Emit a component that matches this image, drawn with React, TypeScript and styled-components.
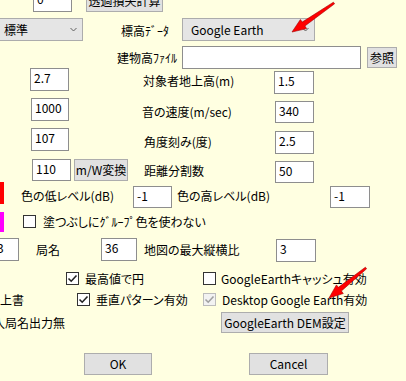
import React from "react";
import styled, { createGlobalStyle } from "styled-components";

const GlobalStyle = createGlobalStyle`
  html, body {
    margin: 0;
    padding: 0;
    background: #ffffe1;
  }
  body {
    font-family: "Noto Sans CJK JP", "Noto Sans", sans-serif;
    font-size: 12px;
    color: #000;
  }
`;

const Form = styled.div`
  position: relative;
  width: 406px;
  height: 381px;
  overflow: hidden;
  background: #ffffe1;
  font-feature-settings: "palt";
`;

const Row = styled.div<{ $top: number; $h: number; $cols: string; $shift?: number }>`
  display: grid;
  grid-template-columns: ${(p) => p.$cols};
  align-items: center;
  height: ${(p) => p.$h}px;
  margin-top: ${(p) => p.$top}px;
  margin-left: ${(p) => p.$shift ?? 0}px;
`;

const Cell = styled.span``;

const Label = styled.span<{ $dy?: number; $right?: boolean; $ml?: number }>`
  white-space: nowrap;
  line-height: 14px;
  margin-top: ${(p) => (p.$dy ?? 0) * 2}px;
  margin-left: ${(p) => p.$ml ?? 0}px;
  justify-self: ${(p) => (p.$right ? "end" : "start")};
`;

const TextBox = styled.div<{ $w: number; $h?: number; $at?: string; $ml?: number; $pad?: number }>`
  box-sizing: border-box;
  width: ${(p) => p.$w}px;
  height: ${(p) => p.$h ?? 23}px;
  margin-left: ${(p) => p.$ml ?? 0}px;
  align-self: ${(p) => p.$at ?? "center"};
  background: #fff;
  border: 1px solid #8e8e8e;
  padding: 0 0 3px ${(p) => p.$pad ?? 3}px;
  display: flex;
  align-items: center;
  line-height: 1;
`;

const Button = styled.div<{ $w: number; $h?: number; $at?: string }>`
  box-sizing: border-box;
  width: ${(p) => p.$w}px;
  height: ${(p) => p.$h ?? 22}px;
  align-self: ${(p) => p.$at ?? "center"};
  background: #e1e1e1;
  border: 1px solid #adadad;
  display: flex;
  align-items: center;
  justify-content: center;
  padding-bottom: 1px;
  white-space: nowrap;
`;

const Combo = styled.div<{ $w: number; $pad: number }>`
  box-sizing: border-box;
  width: ${(p) => p.$w}px;
  height: 23px;
  background: #e5e5e5;
  border: 1px solid #acacac;
  display: flex;
  align-items: center;
  justify-content: space-between;
  padding: 0 5px 1px ${(p) => p.$pad}px;
  white-space: nowrap;
`;

const Swatch = styled.div<{ $color: string; $h: number; $at: string }>`
  width: 4px;
  height: ${(p) => p.$h}px;
  align-self: ${(p) => p.$at};
  background: ${(p) => p.$color};
`;

const Box = styled.div<{ $disabled?: boolean }>`
  box-sizing: border-box;
  width: 13px;
  height: 13px;
  border: 1px solid ${(p) => (p.$disabled ? "#bcbcbc" : "#333")};
  background: ${(p) => (p.$disabled ? "#f2f2f2" : "#fff")};
  display: flex;
  align-items: center;
  justify-content: center;
`;

const Overlay = styled.svg`
  position: absolute;
  left: 0;
  top: 0;
  pointer-events: none;
`;

const Chevron = () => (
  <svg width="7" height="5" viewBox="0 0 7 5">
    <polyline points="0.5,1 3.5,4 6.5,1" fill="none" stroke="#606060" strokeWidth="1" />
  </svg>
);

const Check = ({ checked, disabled }: { checked?: boolean; disabled?: boolean }) => (
  <Box $disabled={disabled}>
    {checked && (
      <svg width="11" height="11" viewBox="0 0 11 11">
        <polyline
          points="1.5,5.5 4.2,8.2 9.5,2.5"
          fill="none"
          stroke={disabled ? "#a0a0a0" : "#222"}
          strokeWidth="1.6"
        />
      </svg>
    )}
  </Box>
);

// red hand-drawn annotation arrow, tail -> tip
function arrowPoints(x1: number, y1: number, x2: number, y2: number) {
  const dx = x2 - x1;
  const dy = y2 - y1;
  const len = Math.hypot(dx, dy);
  const ux = dx / len;
  const uy = dy / len;
  const nx = -uy;
  const ny = ux;
  const bx = x2 - ux * 14;
  const by = y2 - uy * 14;
  const pts = [
    [x1 + nx * 1, y1 + ny * 1],
    [bx + nx * 2.4, by + ny * 2.4],
    [bx + nx * 5.5, by + ny * 5.5],
    [x2, y2],
    [bx - nx * 5.5, by - ny * 5.5],
    [bx - nx * 2.4, by - ny * 2.4],
    [x1 - nx * 1, y1 - ny * 1],
  ];
  return pts.map((p) => p.map((v) => v.toFixed(1)).join(",")).join(" ");
}

const App: React.FC = () => {
  return (
    <>
      <GlobalStyle />
      <Form>
        <Row $top={-11} $h={23} $cols="33px 39px 14px 77px">
          <Cell />
          <TextBox $w={39}>0</TextBox>
          <Cell />
          <Button $w={77} $h={23}>透過損失計算</Button>
        </Row>

        <Row $top={6} $h={23} $shift={-3} $cols="86px 38px 61px 133px">
          <Combo $w={86} $pad={6}>
            <span>標準</span>
            <Chevron />
          </Combo>
          <Cell />
          <Label $dy={1}>標高ﾃﾞｰﾀ</Label>
          <Combo $w={133} $pad={8}>
            <span>Google Earth</span>
            <Chevron />
          </Combo>
        </Row>

        <Row $top={5} $h={23} $cols="177px 5px 179px 6px 30px">
          <Label $right>建物高ﾌｧｲﾙ</Label>
          <Cell />
          <TextBox $w={179} />
          <Cell />
          <Button $w={30} $h={21}>参照</Button>
        </Row>

        <Row $top={-1} $h={26} $cols="30px 39px 74px 131px 40px">
          <Cell />
          <TextBox $w={39} $at="start">2.7</TextBox>
          <Cell />
          <Label>対象者地上高(m)</Label>
          <TextBox $w={40} $at="end">1.5</TextBox>
        </Row>

        <Row $top={4} $h={25} $cols="31px 38px 73px 133px 39px">
          <Cell />
          <TextBox $w={38} $at="start">1000</TextBox>
          <Cell />
          <Label $dy={1}>音の速度(m/sec)</Label>
          <TextBox $w={39} $h={22} $at="end">340</TextBox>
        </Row>

        <Row $top={5} $h={26} $cols="31px 38px 75px 131px 39px">
          <Cell />
          <TextBox $w={38} $at="start">107</TextBox>
          <Cell />
          <Label $dy={1}>角度刻み(度)</Label>
          <TextBox $w={39} $at="end">2.5</TextBox>
        </Row>

        <Row $top={5} $h={24} $cols="32px 39px 3px 54px 16px 131px 39px">
          <Cell />
          <TextBox $w={39} $h={22} $at="start">110</TextBox>
          <Cell />
          <Button $w={54} $h={22} $at="start">m/W変換</Button>
          <Cell />
          <Label>距離分割数</Label>
          <TextBox $w={39} $h={22} $at="end">50</TextBox>
        </Row>

        <Row $top={-1} $h={26} $cols="4px 17px 112px 39px 5px 153px 40px">
          <Swatch $color="#ff0000" $h={22} $at="start" />
          <Cell />
          <Label $dy={1}>色の低レベル(dB)</Label>
          <TextBox $w={39} $h={22} $at="end">-1</TextBox>
          <Cell />
          <Label $dy={1}>色の高レベル(dB)</Label>
          <TextBox $w={40} $h={22} $at="end">-1</TextBox>
        </Row>

        <Row $top={3} $h={21} $cols="4px 19px 13px 7px auto">
          <Swatch $color="#ff00ff" $h={20} $at="end" />
          <Cell />
          <Check />
          <Cell />
          <Label>塗つぶしにｸﾞﾙｰﾌﾟ色を使わない</Label>
        </Row>

        <Row $top={6} $h={24} $cols="19px 17px 65px 36px 7px 132px 40px">
          <TextBox $w={39} $ml={-20} $pad={16} $at="start">3</TextBox>
          <Cell />
          <Label>局名</Label>
          <TextBox $w={36} $at="start">36</TextBox>
          <Cell />
          <Label>地図の最大縦横比</Label>
          <TextBox $w={40} $at="end">3</TextBox>
        </Row>

        <Row $top={9} $h={15} $cols="66px 13px 6px 118px 13px 5px auto">
          <Cell />
          <Check checked />
          <Cell />
          <Label>最高値で円</Label>
          <Check />
          <Cell />
          <Label>GoogleEarthキャッシュ有効</Label>
        </Row>

        <Row $top={6} $h={15} $cols="77px 13px 6px 107px 13px 6px auto">
          <Label>上書</Label>
          <Check checked />
          <Cell />
          <Label>垂直パターン有効</Label>
          <Check checked disabled />
          <Cell />
          <Label>Desktop Google Earth有効</Label>
        </Row>

        <Row $top={5} $h={21} $cols="221px 128px">
          <Label $ml={-7}>入局名出力無</Label>
          <Button $w={128} $h={21}>GoogleEarth DEM設定</Button>
        </Row>

        <Row $top={20} $h={22} $cols="84px 68px 97px 79px">
          <Cell />
          <Button $w={68}>OK</Button>
          <Cell />
          <Button $w={79}>Cancel</Button>
        </Row>

        <Overlay width="406" height="381" viewBox="0 0 406 381">
          <polygon points={arrowPoints(334, 3, 292, 32)} fill="#f00" stroke="#a00000" strokeWidth="0.6" />
          <polygon points={arrowPoints(366, 268, 329, 298)} fill="#f00" stroke="#a00000" strokeWidth="0.6" />
        </Overlay>
      </Form>
    </>
  );
};

export default App;
